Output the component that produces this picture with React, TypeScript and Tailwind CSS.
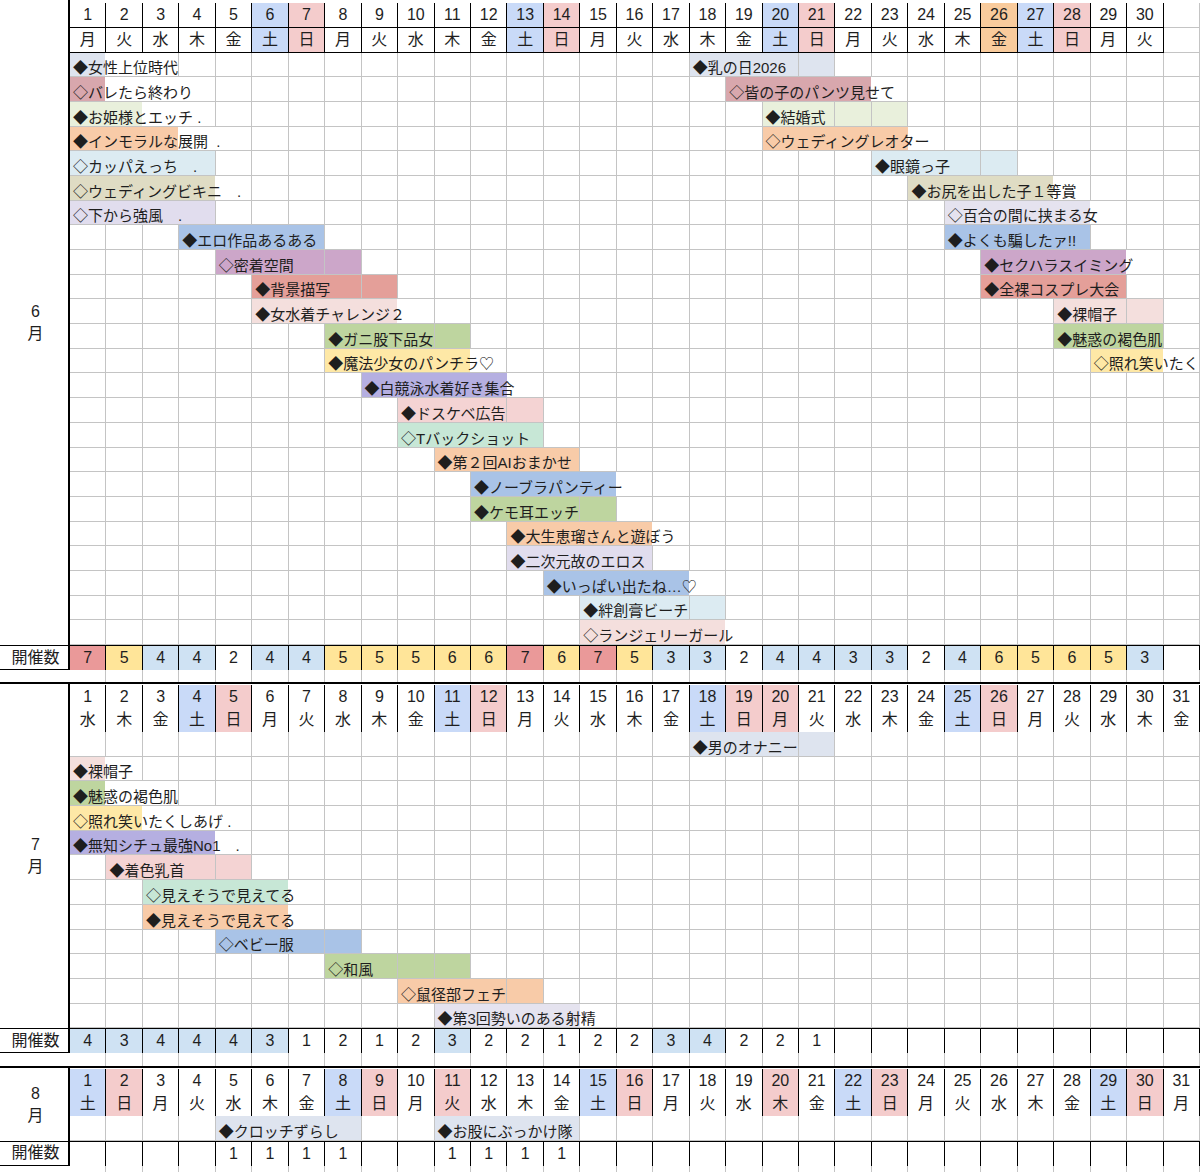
import React from "react";

const COLW = 1130 / 31;
const FONT = '"Liberation Sans", "Noto Sans CJK JP", sans-serif';

type Pal = { hex: string; cls: string };
const P: Record<string, Pal> = {
  gb: { hex: "#dee4ef", cls: "bg-[#dee4ef]" },
  rose: { hex: "#d8a7ad", cls: "bg-[#d8a7ad]" },
  pgreen: { hex: "#e9f0dc", cls: "bg-[#e9f0dc]" },
  peach: { hex: "#f8cba8", cls: "bg-[#f8cba8]" },
  pblue: { hex: "#dcebf2", cls: "bg-[#dcebf2]" },
  khaki: { hex: "#dfdcc4", cls: "bg-[#dfdcc4]" },
  lav: { hex: "#e1ddee", cls: "bg-[#e1ddee]" },
  lav2: { hex: "#e5e3ef", cls: "bg-[#e5e3ef]" },
  blue: { hex: "#a9c3e7", cls: "bg-[#a9c3e7]" },
  mauve: { hex: "#cca6c9", cls: "bg-[#cca6c9]" },
  salmon: { hex: "#e49f99", cls: "bg-[#e49f99]" },
  ppink: { hex: "#f4dfdd", cls: "bg-[#f4dfdd]" },
  green: { hex: "#bed59f", cls: "bg-[#bed59f]" },
  yellow: { hex: "#fee8a6", cls: "bg-[#fee8a6]" },
  purple: { hex: "#b5afe1", cls: "bg-[#b5afe1]" },
  pink: { hex: "#f4d3d3", cls: "bg-[#f4d3d3]" },
  mint: { hex: "#c7e7d6", cls: "bg-[#c7e7d6]" },
};

type Ev = { s: number; e: number; t: string; p: Pal };
const ev = (s: number, e: number, t: string, p: Pal): Ev => ({ s, e, t, p });

const JUNE: Ev[][] = [
  [ev(1, 1, "◆女性上位時代", P.gb), ev(18, 21, "◆乳の日2026", P.gb)],
  [ev(1, 1, "◇バレたら終わり", P.rose), ev(19, 22, "◇皆の子のパンツ見せて", P.rose)],
  [ev(1, 2, "◆お姫様とエッチ .", P.pgreen), ev(20, 23, "◆結婚式", P.pgreen)],
  [ev(1, 3, "◆インモラルな展開  .", P.peach), ev(20, 23, "◇ウェディングレオター", P.peach)],
  [ev(1, 4, "◇カッパえっち　.", P.pblue), ev(23, 26, "◆眼鏡っ子", P.pblue)],
  [ev(1, 4, "◇ウェディングビキニ　.", P.khaki), ev(24, 27, "◆お尻を出した子１等賞", P.khaki)],
  [ev(1, 4, "◇下から強風　.", P.lav), ev(25, 28, "◇百合の間に挟まる女", P.lav2)],
  [ev(4, 7, "◆エロ作品あるある", P.blue), ev(25, 28, "◆よくも騙したァ!!", P.blue)],
  [ev(5, 8, "◇密着空間", P.mauve), ev(26, 29, "◆セクハラスイミング", P.mauve)],
  [ev(6, 9, "◆背景描写", P.salmon), ev(26, 29, "◆全裸コスプレ大会", P.salmon)],
  [ev(6, 9, "◆女水着チャレンジ２", P.ppink), ev(28, 30, "◆裸帽子", P.ppink)],
  [ev(8, 11, "◆ガニ股下品女", P.green), ev(28, 30, "◆魅惑の褐色肌", P.green)],
  [ev(8, 11, "◆魔法少女のパンチラ♡", P.yellow), ev(29, 30, "◇照れ笑いたく", P.yellow)],
  [ev(9, 12, "◆白競泳水着好き集合", P.purple)],
  [ev(10, 13, "◆ドスケベ広告", P.pink)],
  [ev(10, 13, "◇Tバックショット", P.mint)],
  [ev(11, 14, "◆第２回AIおまかせ", P.peach)],
  [ev(12, 15, "◆ノーブラパンティー", P.blue)],
  [ev(12, 15, "◆ケモ耳エッチ", P.green)],
  [ev(13, 16, "◆大生恵瑠さんと遊ぼう", P.peach)],
  [ev(13, 16, "◆二次元故のエロス", P.lav)],
  [ev(14, 17, "◆いっぱい出たね…♡", P.blue)],
  [ev(15, 18, "◆絆創膏ビーチ", P.pblue)],
  [ev(15, 18, "◇ランジェリーガール", P.ppink)],
];

const JULY: Ev[][] = [
  [ev(18, 21, "◆男のオナニー", P.gb)],
  [ev(1, 1, "◆裸帽子", P.ppink)],
  [ev(1, 1, "◆魅惑の褐色肌", P.green)],
  [ev(1, 2, "◇照れ笑いたくしあげ .", P.yellow)],
  [ev(1, 4, "◆無知シチュ最強No1　.", P.purple)],
  [ev(2, 5, "◆着色乳首", P.pink)],
  [ev(3, 6, "◇見えそうで見えてる", P.mint)],
  [ev(3, 6, "◆見えそうで見えてる", P.peach)],
  [ev(5, 8, "◇ベビー服", P.blue)],
  [ev(8, 11, "◇和風", P.green)],
  [ev(10, 13, "◇鼠径部フェチ", P.peach)],
  [ev(11, 14, "◆第3回勢いのある射精", P.lav2)],
];

const AUG: Ev[][] = [
  [ev(5, 8, "◆クロッチずらし", P.gb), ev(11, 14, "◆お股にぶっかけ隊", P.gb)],
];

const JUNE_CNT: (number | null)[] = [7, 5, 4, 4, 2, 4, 4, 5, 5, 5, 6, 6, 7, 6, 7, 5, 3, 3, 2, 4, 4, 3, 3, 2, 4, 6, 5, 6, 5, 3];
const JULY_CNT: (number | null)[] = [4, 3, 4, 4, 4, 3, 1, 2, 1, 2, 3, 2, 2, 1, 2, 2, 3, 4, 2, 2, 1];
const AUG_CNT: (number | null)[] = [null, null, null, null, 1, 1, 1, 1, null, null, 1, 1, 1, 1];

const WD = ["日", "月", "火", "水", "木", "金", "土"];

type MonthDef = { startWd: number; n: number; sat: number[]; sun: number[]; orange: number[] };
const M6: MonthDef = { startWd: 1, n: 30, sat: [6, 13, 20, 27], sun: [7, 14, 21, 28], orange: [26] };
const M7: MonthDef = { startWd: 3, n: 31, sat: [4, 11, 18, 25], sun: [5, 12, 19, 20, 26], orange: [] };
const M8: MonthDef = { startWd: 6, n: 31, sat: [1, 8, 15, 22, 29], sun: [2, 9, 11, 16, 20, 23, 30], orange: [] };

function dayBg(m: MonthDef, d: number) {
  if (m.orange.includes(d)) return "bg-[#f9cb9c]";
  if (m.sat.includes(d)) return "bg-[#c9daf8]";
  if (m.sun.includes(d)) return "bg-[#f4cccc]";
  return "bg-white";
}

function cntBg(v: number | null) {
  if (v === null) return "bg-white";
  if (v >= 7) return "bg-[#ea9999]";
  if (v >= 5) return "bg-[#ffe599]";
  if (v >= 3) return "bg-[#cfe2f3]";
  return "bg-white";
}

const GRID = "grid grid-cols-[repeat(31,minmax(0,1fr))]";

function HeaderRow({ m, kind, h }: { m: MonthDef; kind: "date" | "week"; h: string }) {
  const cells = [];
  for (let c = 1; c <= 31; c++) {
    if (c <= m.n) {
      cells.push(
        <div
          key={c}
          className={`flex min-w-0 items-center justify-center border-r border-b border-black text-[16px] text-[#1e1e1e] ${dayBg(m, c)}`}
        >
          {kind === "date" ? c : WD[(m.startWd + c - 1) % 7]}
        </div>
      );
    } else {
      cells.push(<div key={c} className="min-w-0 border-r border-b border-[#c4c4c4] bg-white" />);
    }
  }
  return <div className={`${GRID} ${h}`}>{cells}</div>;
}

function EventRow({ evs }: { evs: Ev[] }) {
  const cells = [];
  for (let c = 1; c <= 31; c++) {
    const e = evs.find((x) => c >= x.s && c <= x.e);
    const W = e ? (e.e - e.s + 1) * COLW - 1 : 0;
    cells.push(
      <div key={c} className={`min-w-0 border-r border-b border-[#c4c4c4] ${e ? e.p.cls : "bg-white"}`}>
        {e && e.s === c && (
          <div
            className="relative z-10 flex h-full w-max items-end whitespace-pre pl-[3px] text-[15px] leading-[17px] text-[#1e1e1e]"
            style={{ background: `linear-gradient(to right, ${e.p.hex} ${W}px, #ffffff ${W}px)` }}
          >
            {e.t}
          </div>
        )}
      </div>
    );
  }
  return <div className={`${GRID} h-[24.7px]`}>{cells}</div>;
}

function CountRow({ vals }: { vals: (number | null)[] }) {
  const cells = [];
  for (let c = 1; c <= 31; c++) {
    const v = c <= vals.length ? vals[c - 1] : null;
    cells.push(
      <div key={c} className={`flex min-w-0 items-center justify-center border-r border-black text-[16px] text-[#1e1e1e] ${cntBg(v)}`}>
        {v ?? ""}
      </div>
    );
  }
  return (
    <div className="flex h-[25px] border-y border-black">
      <div className="flex w-[70px] shrink-0 items-center justify-center border-r-2 border-black pl-[3px] text-[16px] text-[#1e1e1e]">
        開催数
      </div>
      <div className={`${GRID} flex-1`}>{cells}</div>
    </div>
  );
}

function GapRow({ h }: { h: string }) {
  const cells = [];
  for (let c = 1; c <= 31; c++) cells.push(<div key={c} className="min-w-0 border-r border-[#c4c4c4]" />);
  return (
    <div className={`flex ${h}`}>
      <div className="w-[70px] shrink-0" />
      <div className={`${GRID} flex-1`}>{cells}</div>
    </div>
  );
}

function Section({
  m,
  label,
  rows,
  top,
  dateH,
  weekH,
}: {
  m: MonthDef;
  label: string;
  rows: Ev[][];
  top: boolean;
  dateH: string;
  weekH: string;
}) {
  return (
    <div className={`flex ${top ? "border-t-2 border-black" : ""}`}>
      <div className="flex w-[70px] shrink-0 flex-col items-center justify-center border-r-2 border-black pl-[3px] text-[16px] leading-[22px] text-[#1e1e1e]">
        <span>{label}</span>
        <span>月</span>
      </div>
      <div className="min-w-0 flex-1">
        <HeaderRow m={m} kind="date" h={dateH} />
        <HeaderRow m={m} kind="week" h={weekH} />
        {rows.map((r, i) => (
          <EventRow key={i} evs={r} />
        ))}
      </div>
    </div>
  );
}

export default function App() {
  return (
    <div className="h-[1172px] w-[1200px] overflow-hidden bg-white" style={{ fontFamily: FONT }}>
      <Section m={M6} label="6" rows={JUNE} top={false} dateH="h-[28px] pt-[3px]" weekH="h-[24.5px]" />
      <CountRow vals={JUNE_CNT} />
      <GapRow h="h-[12px]" />
      <Section m={M7} label="7" rows={JULY} top={true} dateH="h-[23px] pt-[1px]" weekH="h-[25px] pt-[1px]" />
      <CountRow vals={JULY_CNT} />
      <GapRow h="h-[13px]" />
      <Section m={M8} label="8" rows={AUG} top={true} dateH="h-[23px] pt-[1px]" weekH="h-[25px] pt-[1px]" />
      <CountRow vals={AUG_CNT} />
      <GapRow h="h-[8px]" />
    </div>
  );
}
